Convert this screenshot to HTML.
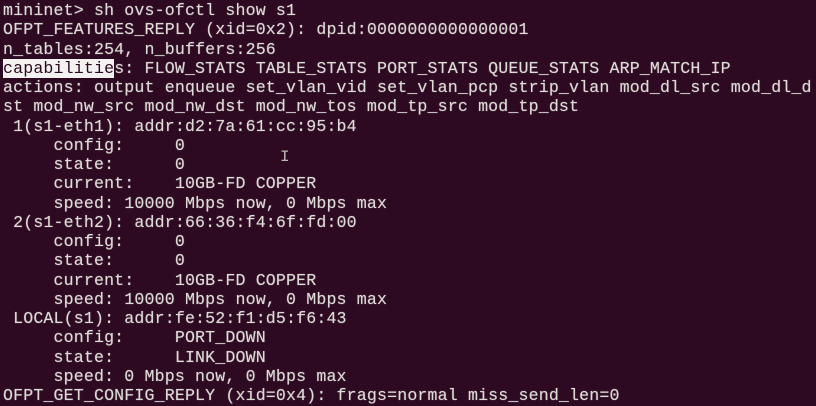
<!DOCTYPE html>
<html><head><meta charset="utf-8"><style>
html,body{margin:0;padding:0;background:#2d0a22;width:816px;height:406px;overflow:hidden}
pre{margin:0;padding:1px 0 0 3px;font-family:"Liberation Mono",monospace;font-size:16.6px;letter-spacing:0.15px;line-height:19.25px;color:#dedad6;white-space:pre;text-shadow:0 0 1px rgba(222,218,214,.6)}
.h{background:#f4f2f0;color:#2d0a22;text-shadow:none}
.c{position:absolute;left:280px;top:148px;color:#bdb6b2;font-family:"Liberation Mono",monospace;font-size:16px}
</style></head><body><pre>mininet&gt; sh ovs-ofctl show s1
OFPT_FEATURES_REPLY (xid=0x2): dpid:0000000000000001
n_tables:254, n_buffers:256
<span class="h">capabilitie</span>s: FLOW_STATS TABLE_STATS PORT_STATS QUEUE_STATS ARP_MATCH_IP
actions: output enqueue set_vlan_vid set_vlan_pcp strip_vlan mod_dl_src mod_dl_d
st mod_nw_src mod_nw_dst mod_nw_tos mod_tp_src mod_tp_dst
 1(s1-eth1): addr:d2:7a:61:cc:95:b4
     config:     0
     state:      0
     current:    10GB-FD COPPER
     speed: 10000 Mbps now, 0 Mbps max
 2(s1-eth2): addr:66:36:f4:6f:fd:00
     config:     0
     state:      0
     current:    10GB-FD COPPER
     speed: 10000 Mbps now, 0 Mbps max
 LOCAL(s1): addr:fe:52:f1:d5:f6:43
     config:     PORT_DOWN
     state:      LINK_DOWN
     speed: 0 Mbps now, 0 Mbps max
OFPT_GET_CONFIG_REPLY (xid=0x4): frags=normal miss_send_len=0</pre><div class="c">I</div></body></html>
